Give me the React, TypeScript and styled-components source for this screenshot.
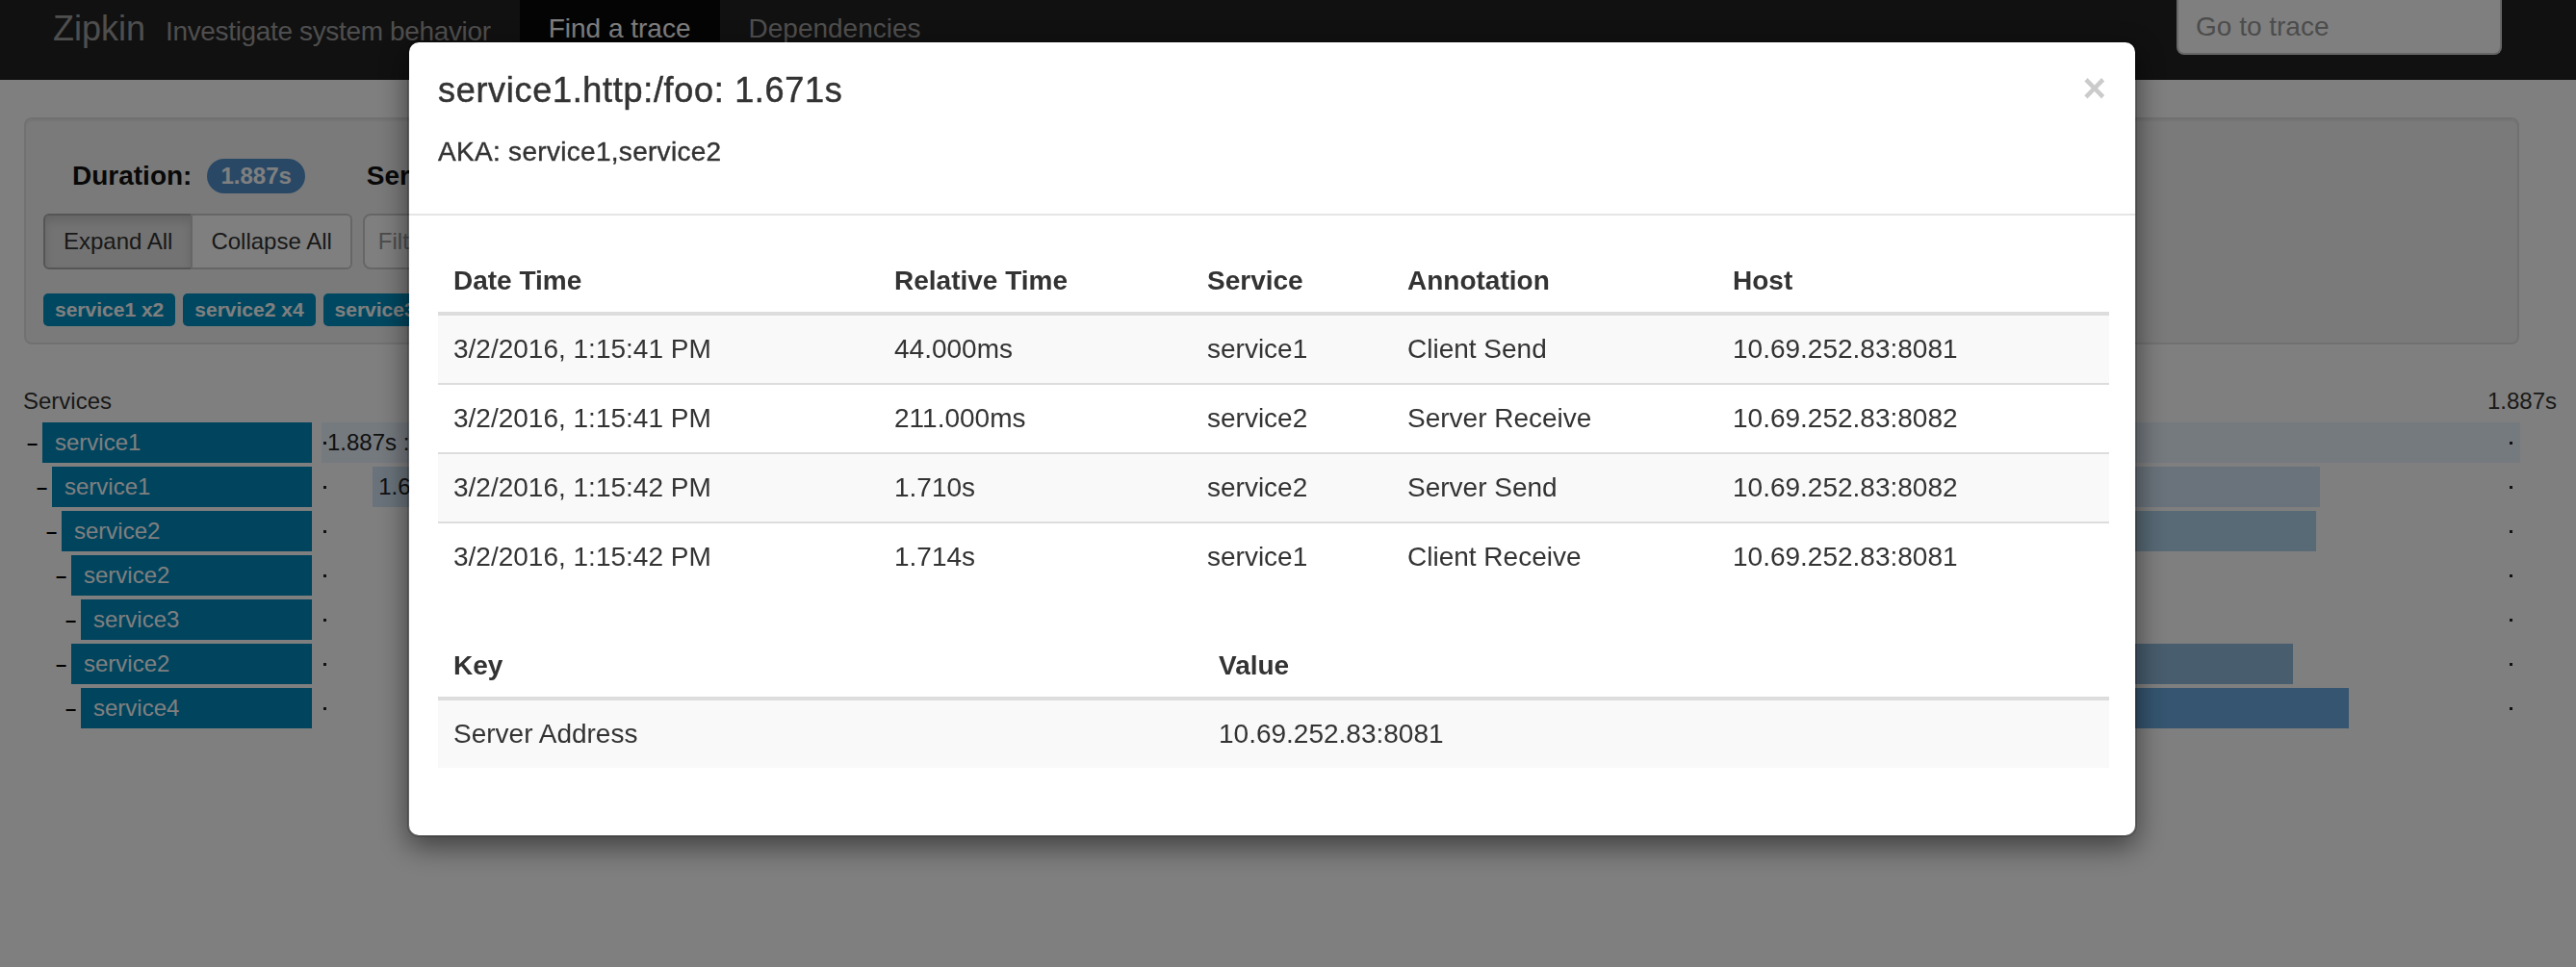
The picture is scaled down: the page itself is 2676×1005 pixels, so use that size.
import React from "react";
import styled, { createGlobalStyle, css } from "styled-components";

const GlobalStyle = createGlobalStyle`
  html, body { margin: 0; padding: 0; background: #fff; }
  body {
    font-family: "Liberation Sans", Arial, Helvetica, sans-serif;
    color: #333;
    font-size: 28px;
    line-height: 40px;
  }
  * { box-sizing: border-box; }
`;

const Page = styled.div`
  width: 2676px;
  height: 1005px;
  background: #fff;
  overflow: hidden;
`;

/* ---------- navbar ---------- */
const Navbar = styled.nav`
  display: flex;
  align-items: flex-start;
  height: 83px;
  background: #222;
  padding: 0 77px 0 55px;
`;

const BrandGroup = styled.div`
  display: flex;
  align-items: baseline;
  gap: 21px;
  padding-top: 10px;
`;

const Brand = styled.span`
  font-size: 36px;
  line-height: 40px;
  color: #9d9d9d;
`;

const Tagline = styled.span`
  font-size: 28px;
  line-height: 40px;
  letter-spacing: -0.35px;
  color: #9d9d9d;
`;

const NavList = styled.div`
  display: flex;
  margin-left: 30px;
`;

const NavLink = styled.a<{ $active?: boolean }>`
  display: block;
  height: 83px;
  padding: 10px 30px 0;
  font-size: 28px;
  line-height: 40px;
  color: #9d9d9d;
  text-decoration: none;
  ${(p) =>
    p.$active &&
    css`
      color: #fff;
      background: #080808;
    `}
`;

const Spacer = styled.div`
  flex: 1;
`;

const GoToInput = styled.input`
  width: 338px;
  height: 57px;
  border: 2px solid #ccc;
  border-top-width: 0;
  border-radius: 0 0 8px 8px;
  background: #fff;
  padding: 0 18px;
  font-family: inherit;
  font-size: 28px;
  color: #555;
  outline: none;
  &::placeholder { color: #999; }
`;

/* ---------- page content ---------- */
const Content = styled.main`
  padding: 39px 20px 0 24px;
`;

const Well = styled.section`
  margin: 0 39px 0 1px;
  height: 236px;
  padding: 40px 18px 17px;
  background: #f5f5f5;
  border: 2px solid #e3e3e3;
  border-radius: 8px;
  box-shadow: inset 0 2px 2px rgba(0, 0, 0, 0.05);
`;

const SummaryRow = styled.div`
  display: flex;
  align-items: center;
  gap: 64px;
  height: 38px;
  margin-left: 30px;
`;

const SummaryItem = styled.div`
  display: flex;
  align-items: center;
  gap: 16px;
  font-size: 28px;
  font-weight: bold;
  color: #111;
  white-space: nowrap;
`;

const Badge = styled.span`
  display: inline-block;
  height: 36px;
  padding: 0 14px;
  border-radius: 18px;
  background: #5290cc;
  color: #fff;
  font-size: 24px;
  line-height: 36px;
  font-weight: bold;
`;

const Controls = styled.div`
  display: flex;
  gap: 11px;
  margin-top: 20px;
`;

const BtnGroup = styled.div`
  display: flex;
`;

const Btn = styled.button<{ $active?: boolean }>`
  height: 58px;
  padding: 0 19px;
  font-family: inherit;
  font-size: 24px;
  line-height: 36px;
  color: #333;
  background: #fff;
  border: 2px solid #ccc;
  &:first-child { border-radius: 6px 0 0 6px; }
  &:last-child { border-radius: 0 6px 6px 0; margin-left: -2px; }
  ${(p) =>
    p.$active &&
    css`
      background: #e6e6e6;
      border-color: #adadad;
      box-shadow: inset 0 6px 10px rgba(0, 0, 0, 0.125);
    `}
`;

const FilterInput = styled.input`
  width: 500px;
  height: 58px;
  border: 2px solid #ccc;
  border-radius: 8px;
  padding: 0 14px;
  font-family: inherit;
  font-size: 24px;
  background: #fff;
  outline: none;
  &::placeholder { color: #999; }
`;

const Tags = styled.div`
  display: flex;
  gap: 8px;
  margin-top: 25px;
`;

const Tag = styled.span`
  display: inline-block;
  padding: 6px 12px 7px;
  border-radius: 5px;
  background: #0090c2;
  color: #fff;
  font-size: 21px;
  line-height: 21px;
  font-weight: bold;
  white-space: nowrap;
`;

/* ---------- trace timeline ---------- */
const Trace = styled.section`
  margin-top: 39px;
`;

const TraceHeader = styled.div`
  display: flex;
  justify-content: space-between;
  height: 40px;
  margin-bottom: 2px;
  font-size: 24px;
  line-height: 40px;
  color: #333;
`;

const TraceRow = styled.div`
  display: flex;
  height: 42px;
  margin-bottom: 4px;
  padding-right: 38px;
`;

const ServiceCell = styled.div<{ $depth: number }>`
  display: flex;
  align-items: center;
  width: 300px;
  flex-shrink: 0;
  padding-left: ${(p) => 4 + p.$depth * 10}px;
`;

const Toggle = styled.span`
  width: 11px;
  margin-right: 5px;
  font-size: 20px;
  font-weight: bold;
  line-height: 20px;
  color: #000;
  overflow: hidden;
`;

const NameBar = styled.div`
  flex: 1;
  height: 42px;
  padding-left: 13px;
  background: #0088bc;
  color: #fff;
  font-size: 24px;
  line-height: 42px;
  white-space: nowrap;
`;

const Timeline = styled.div`
  position: relative;
  flex: 1;
  height: 42px;
  margin-left: 10px;
`;

const SpanBar = styled.div<{ $bg: string }>`
  position: absolute;
  top: 0;
  bottom: 0;
  padding-left: 6px;
  background: ${(p) => p.$bg};
  color: #222;
  font-size: 24px;
  line-height: 42px;
  white-space: nowrap;
`;

const Dot = styled.span<{ $side: "left" | "right" }>`
  position: absolute;
  top: 20px;
  width: 3px;
  height: 3px;
  background: #222;
  ${(p) => (p.$side === "left" ? "left: 2px;" : "right: 8px;")}
`;

/* ---------- modal ---------- */
const Backdrop = styled.div`
  position: fixed;
  inset: 0;
  background: #000;
  opacity: 0.5;
  z-index: 1040;
`;

const ModalLayer = styled.div`
  position: fixed;
  inset: 0;
  z-index: 1050;
  overflow: hidden;
`;

const Dialog = styled.div`
  width: 1797px;
  margin: 42px 0 0 423px;
  background: #fff;
  background-clip: padding-box;
  border: 2px solid rgba(0, 0, 0, 0.2);
  border-radius: 12px;
  box-shadow: 0 10px 30px rgba(0, 0, 0, 0.5);
`;

const ModalHeader = styled.header`
  display: flex;
  align-items: flex-start;
  padding: 30px;
  border-bottom: 2px solid #e5e5e5;
`;

const HeaderText = styled.div`
  flex: 1;
`;

const Title = styled.h4`
  margin: 0;
  font-size: 36px;
  line-height: 40px;
  font-weight: normal;
  letter-spacing: 0.7px;
  color: #333;
  -webkit-text-stroke: 0.5px #333;
`;

const Aka = styled.h5`
  margin: 28px 0 18px;
  font-size: 28px;
  line-height: 32px;
  font-weight: normal;
  letter-spacing: 0.3px;
  color: #333;
  -webkit-text-stroke: 0.4px #333;
`;

const Close = styled.button`
  margin-top: -3px;
  padding: 0;
  border: 0;
  background: transparent;
  font-family: inherit;
  font-size: 42px;
  font-weight: bold;
  line-height: 1;
  color: #000;
  opacity: 0.2;
  cursor: pointer;
`;

const ModalBody = styled.div`
  padding: 30px;
`;

const Table = styled.table`
  width: 100%;
  table-layout: fixed;
  border-collapse: collapse;
  border-spacing: 0;
  margin-bottom: 40px;
  tbody tr:nth-of-type(odd) { background: #f9f9f9; }
`;

const Th = styled.th<{ $w: number }>`
  width: ${(p) => p.$w}px;
  padding: 19px 16px 13px;
  text-align: left;
  vertical-align: bottom;
  font-size: 28px;
  line-height: 38px;
  font-weight: bold;
  color: #333;
  border-bottom: 4px solid #ddd;
`;

const Td = styled.td`
  padding: 16px;
  font-size: 28px;
  line-height: 38px;
  color: #333;
  border-top: 2px solid #ddd;
  white-space: nowrap;
`;

/* ---------- data ---------- */
const TOTAL = 1887;

const spans = [
  { name: "service1", depth: 0, start: 0, dur: 1887, bg: "#eaf4fe", label: "1.887s : get" },
  { name: "service1", depth: 1, start: 44, dur: 1671, bg: "#d4e6f6", label: "1.671s : http:/foo" },
  { name: "service2", depth: 2, start: 211, dur: 1501, bg: "#b0d4ec", label: "1.499s : http:/foo" },
  { name: "service2", depth: 3, start: 320, dur: 560, bg: "#a2c8e6", label: "560.000ms : get" },
  { name: "service3", depth: 4, start: 360, dur: 420, bg: "#96c0e2", label: "420.000ms : query" },
  { name: "service2", depth: 3, start: 950, dur: 742, bg: "#90badc", label: "742.000ms : get" },
  { name: "service4", depth: 4, start: 1000, dur: 740, bg: "#6aaae0", label: "740.000ms : query" },
];

const annotations = [
  ["3/2/2016, 1:15:41 PM", "44.000ms", "service1", "Client Send", "10.69.252.83:8081"],
  ["3/2/2016, 1:15:41 PM", "211.000ms", "service2", "Server Receive", "10.69.252.83:8082"],
  ["3/2/2016, 1:15:42 PM", "1.710s", "service2", "Server Send", "10.69.252.83:8082"],
  ["3/2/2016, 1:15:42 PM", "1.714s", "service1", "Client Receive", "10.69.252.83:8081"],
];

const annotationCols: [string, number][] = [
  ["Date Time", 458],
  ["Relative Time", 325],
  ["Service", 208],
  ["Annotation", 338],
  ["Host", 407],
];

export default function App() {
  return (
    <>
      <GlobalStyle />
      <Page>
        <Navbar>
          <BrandGroup>
            <Brand>Zipkin</Brand>
            <Tagline>Investigate system behavior</Tagline>
          </BrandGroup>
          <NavList>
            <NavLink $active>Find a trace</NavLink>
            <NavLink>Dependencies</NavLink>
          </NavList>
          <Spacer />
          <GoToInput placeholder="Go to trace" />
        </Navbar>

        <Content>
          <Well>
            <SummaryRow>
              <SummaryItem>
                Duration: <Badge>1.887s</Badge>
              </SummaryItem>
              <SummaryItem>
                Services: <Badge>4</Badge>
              </SummaryItem>
              <SummaryItem>
                Depth: <Badge>5</Badge>
              </SummaryItem>
              <SummaryItem>
                Total Spans: <Badge>7</Badge>
              </SummaryItem>
            </SummaryRow>
            <Controls>
              <BtnGroup>
                <Btn $active>Expand All</Btn>
                <Btn>Collapse All</Btn>
              </BtnGroup>
              <FilterInput placeholder="Filter Service" />
            </Controls>
            <Tags>
              <Tag>service1 x2</Tag>
              <Tag>service2 x4</Tag>
              <Tag>service3 x1</Tag>
              <Tag>service4 x1</Tag>
            </Tags>
          </Well>

          <Trace>
            <TraceHeader>
              <span>Services</span>
              <span>1.887s</span>
            </TraceHeader>
            {spans.map((s, i) => (
              <TraceRow key={i}>
                <ServiceCell $depth={s.depth}>
                  <Toggle>–</Toggle>
                  <NameBar>{s.name}</NameBar>
                </ServiceCell>
                <Timeline>
                  <SpanBar
                    $bg={s.bg}
                    style={{
                      left: `${(s.start / TOTAL) * 100}%`,
                      width: `${(s.dur / TOTAL) * 100}%`,
                    }}
                  >
                    {s.label}
                  </SpanBar>
                  <Dot $side="left" />
                  <Dot $side="right" />
                </Timeline>
              </TraceRow>
            ))}
          </Trace>
        </Content>
      </Page>

      <Backdrop />
      <ModalLayer>
        <Dialog>
          <ModalHeader>
            <HeaderText>
              <Title>service1.http:/foo: 1.671s</Title>
              <Aka>AKA: service1,service2</Aka>
            </HeaderText>
            <Close aria-label="Close">×</Close>
          </ModalHeader>
          <ModalBody>
            <Table>
              <thead>
                <tr>
                  {annotationCols.map(([label, w]) => (
                    <Th key={label} $w={w}>
                      {label}
                    </Th>
                  ))}
                </tr>
              </thead>
              <tbody>
                {annotations.map((row, i) => (
                  <tr key={i}>
                    {row.map((cell, j) => (
                      <Td key={j}>{cell}</Td>
                    ))}
                  </tr>
                ))}
              </tbody>
            </Table>
            <Table>
              <thead>
                <tr>
                  <Th $w={795}>Key</Th>
                  <Th $w={941}>Value</Th>
                </tr>
              </thead>
              <tbody>
                <tr>
                  <Td>Server Address</Td>
                  <Td>10.69.252.83:8081</Td>
                </tr>
              </tbody>
            </Table>
          </ModalBody>
        </Dialog>
      </ModalLayer>
    </>
  );
}
